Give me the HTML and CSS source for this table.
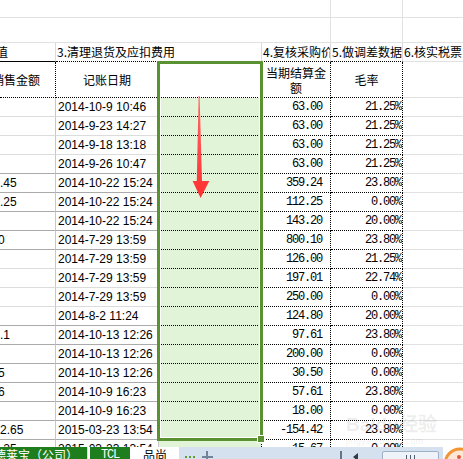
FILE: index.html
```html
<!DOCTYPE html>
<html lang="zh-CN">
<head>
<meta charset="utf-8">
<title>Sheet</title>
<link rel="stylesheet" href="styles.css">
</head>
<body>
<div class="page">
  <div class="sheet">
    <!-- row 1 -->
    <div class="c top span4"></div><div class="c top e-top"></div><div class="c top"></div>
    <!-- row 2 -->
    <div class="c top span4"></div><div class="c top e-top"></div><div class="c top"></div>
    <!-- row 3 -->
    <div class="c h1 h1a"><span class="shift16">价值</span></div>
    <div class="c h1 span2">3.清理退货及应扣费用</div>
    <div class="c h1">4.复核采购价格</div>
    <div class="c h1">5.做调差数据</div>
    <div class="c h1 h1f">6.核实税票</div>
    <!-- row 4 -->
    <div class="c h2 h2a"><span class="shift8">销售金额</span></div>
    <div class="c h2 center">记账日期</div>
    <div class="c h2 h2s"></div>
    <div class="c h2 center wrap">当期结算金额</div>
    <div class="c h2 center">毛率</div>
    <div class="c h2f"></div>

    <div class="c a"></div><div class="c b">2014-10-9 10:46</div><div class="c s"></div><div class="c n d">63.00</div><div class="c n e">21.25%</div><div class="c f"></div>
    <div class="c a"></div><div class="c b">2014-9-23 14:27</div><div class="c s"></div><div class="c n d">63.00</div><div class="c n e">21.25%</div><div class="c f"></div>
    <div class="c a"></div><div class="c b">2014-9-18 13:18</div><div class="c s"></div><div class="c n d">63.00</div><div class="c n e">21.25%</div><div class="c f"></div>
    <div class="c a dk"></div><div class="c b dk">2014-9-26 10:47</div><div class="c s"></div><div class="c n d">63.00</div><div class="c n e">21.25%</div><div class="c f"></div>
    <div class="c a dk">.45</div><div class="c b dk">2014-10-22 15:24</div><div class="c s"></div><div class="c n d">359.24</div><div class="c n e">23.80%</div><div class="c f"></div>
    <div class="c a dk">.25</div><div class="c b dk">2014-10-22 15:24</div><div class="c s"></div><div class="c n d">112.25</div><div class="c n e">0.00%</div><div class="c f"></div>
    <div class="c a dk"></div><div class="c b dk">2014-10-22 15:24</div><div class="c s"></div><div class="c n d">143.20</div><div class="c n e">20.00%</div><div class="c f"></div>
    <div class="c a dk"><span class="shift2">0</span></div><div class="c b dk">2014-7-29 13:59</div><div class="c s"></div><div class="c n d">800.10</div><div class="c n e">23.80%</div><div class="c f"></div>
    <div class="c a"></div><div class="c b">2014-7-29 13:59</div><div class="c s"></div><div class="c n d">126.00</div><div class="c n e">21.25%</div><div class="c f"></div>
    <div class="c a"></div><div class="c b">2014-7-29 13:59</div><div class="c s"></div><div class="c n d">197.01</div><div class="c n e">22.74%</div><div class="c f"></div>
    <div class="c a"></div><div class="c b">2014-7-29 13:59</div><div class="c s"></div><div class="c n d">250.00</div><div class="c n e">0.00%</div><div class="c f"></div>
    <div class="c a dk"></div><div class="c b dk">2014-8-2 11:24</div><div class="c s"></div><div class="c n d">124.80</div><div class="c n e">20.00%</div><div class="c f"></div>
    <div class="c a dk">.1</div><div class="c b dk">2014-10-13 12:26</div><div class="c s"></div><div class="c n d">97.61</div><div class="c n e">23.80%</div><div class="c f"></div>
    <div class="c a dk"></div><div class="c b dk">2014-10-13 12:26</div><div class="c s"></div><div class="c n d">200.00</div><div class="c n e">0.00%</div><div class="c f"></div>
    <div class="c a dk"><span class="shift2">5</span></div><div class="c b dk">2014-10-13 12:26</div><div class="c s"></div><div class="c n d">30.50</div><div class="c n e">0.00%</div><div class="c f"></div>
    <div class="c a dk"><span class="shift2">6</span></div><div class="c b dk">2014-10-9 16:23</div><div class="c s"></div><div class="c n d">57.61</div><div class="c n e">23.80%</div><div class="c f"></div>
    <div class="c a dk"></div><div class="c b dk">2014-10-9 16:23</div><div class="c s"></div><div class="c n d">18.00</div><div class="c n e">0.00%</div><div class="c f"></div>
    <div class="c a dk">2.65</div><div class="c b dk">2015-03-23 13:54</div><div class="c s"></div><div class="c n d">-154.42</div><div class="c n e">23.80%</div><div class="c f"></div>
    <div class="c a dk">.25</div><div class="c b dk">2015-03-23 13:54</div><div class="c s"></div><div class="c n d">-15.67</div><div class="c n e">0.00%</div><div class="c f"></div>
  </div>

  <div class="tabs">
    <div class="tab tab-first">德莱宝（公司）</div>
    <div class="tab tab-tcl">TCL</div>
    <div class="tab tab-plain">品尚</div>
    <div class="tab-rest">
      <span class="dots"><i></i><i></i><i></i></span>
      <span class="plus"></span>
      <span class="sep"></span>
      <span class="larrow"></span>
      <span class="thumb"><i></i><i></i><i></i></span>
    </div>
    <div class="logo">
      <svg width="20" height="12" viewBox="0 0 20 12"><circle cx="17" cy="17" r="15" fill="#fde8d6" stroke="#f29434" stroke-width="3"/><circle cx="16" cy="10" r="2" fill="#e2553b"/></svg>
    </div>
  </div>

  <div class="selection"><span class="handle"></span></div>

  <svg class="arrow" width="24" height="108" viewBox="188 94 24 108">
    <defs>
      <linearGradient id="ag" x1="0" y1="0" x2="0" y2="1">
        <stop offset="0" stop-color="#ff6a6a"/>
        <stop offset="1" stop-color="#ff3030"/>
      </linearGradient>
    </defs>
    <path d="M198.6 96 L199.6 96 L202 181 L209.3 181 L200.6 198 L192.6 181 L196.8 181 Z" fill="url(#ag)"/>
  </svg>

  <div class="watermark">Baidu经验<small>jingyan.baidu.com</small></div>
</div>
</body>
</html>
```

FILE: styles.css
```css
* { box-sizing: border-box; margin: 0; padding: 0; }
html, body { width: 463px; height: 459px; overflow: hidden; background: #fff; }
body {
  font-family: "Noto Sans CJK SC", "Liberation Sans", sans-serif;
  font-size: 12px;
  color: #000;
}
.page { position: relative; width: 463px; height: 459px; overflow: hidden; }

.sheet {
  display: grid;
  grid-template-columns: 56px 103px 103px 69px 72px 60px;
  grid-template-rows: 18px 25px 19px 36px;
  grid-auto-rows: 19px;
  height: 447px;
  overflow: hidden;
}
.c {
  display: flex;
  align-items: center;
  white-space: nowrap;
  overflow: hidden;
  border-bottom: 1px solid #e1e1e1;
  line-height: 14px;
}

/* top blank rows */
.span4 { grid-column: span 4; border-right: 1px solid #e1e1e1; }
.e-top { border-right: 1px solid #e1e1e1; }

/* header row 1 */
.h1 { border-right: 1px solid #dadada; border-bottom: 1px dotted #000; padding-left: 1px; }
.h1a { border-bottom: 1px solid #000; padding-left: 0; }
.h1f { border-right: none; border-bottom: 1px solid #e1e1e1; }
.span2 { grid-column: span 2; }

/* header row 2 */
.h2 { border-right: 1px dotted #000; border-bottom: 1px dotted #000; }
.h2a { padding-left: 0; }
.h2f { border-bottom: 1px solid #e1e1e1; }
.center { justify-content: center; text-align: center; }
.wrap { white-space: normal; line-height: 15px; padding: 0 3px; }

.shift16 { margin-left: -16px; }
.shift8 { margin-left: -8px; }
.shift2 { margin-left: -2px; }

/* data */
.a {
  border-right: 1px solid #c8c8c8;
  border-bottom: 1px solid #dcdcdc;
  font-family: "Liberation Sans", Arial, sans-serif;
}
.b {
  border-right: 1px solid #c8c8c8;
  border-bottom: 1px solid #dcdcdc;
  padding-left: 2px;
  font-family: "Liberation Sans", Arial, sans-serif;
}
.a.dk, .b.dk { border-bottom-color: #ababab; }
.s {
  background: #e2f4d7;
  border-right: 1px dotted #000;
  border-bottom: 1px dotted #000;
}
.n {
  justify-content: flex-end;
  border-right: 1px dotted #000;
  border-bottom: 1px dotted #000;
  font-family: "Liberation Mono", "DejaVu Sans Mono", monospace;
  font-size: 12px;
  letter-spacing: -1.2px;
}
.d { padding-right: 8px; }
.e { padding-right: 1px; }
.f { border-bottom: 1px solid #e1e1e1; }

/* selection overlay */
.selection {
  position: absolute;
  left: 157px;
  top: 61px;
  width: 106px;
  height: 380px;
  border: 3px solid #5a9232;
  box-shadow: inset 0 0 0 1px #fff;
}
.handle {
  position: absolute;
  right: -5px;
  bottom: -5px;
  width: 8px;
  height: 8px;
  background: #5a9232;
  border: 1px solid #fff;
}

.arrow { position: absolute; left: 188px; top: 94px; }

.watermark {
  position: absolute;
  left: 346px;
  top: 414px;
  font-family: "Liberation Sans", sans-serif;
  font-size: 19px;
  font-weight: bold;
  color: rgba(150, 150, 150, 0.16);
  line-height: 22px;
  display: flex;
  flex-direction: column;
}
.watermark small { font-size: 9px; line-height: 10px; font-weight: normal; letter-spacing: 0.3px; }

/* sheet tabs */
.tabs {
  display: flex;
  height: 12px;
  overflow: hidden;
  background: #fff;
}
.tab { height: 12px; line-height: 16px; white-space: nowrap; overflow: hidden; flex: none; }
.tab-first {
  width: 88px;
  background: #1e7e1e;
  color: #fff;
  display: flex;
  justify-content: flex-end;
  padding-right: 9px;
  border-right: 1px solid #cfe3cf;
}
.tab-tcl {
  width: 40px;
  margin-left: 2px;
  background: #1e7e1e;
  color: #fff;
  text-align: center;
  font-family: "Liberation Mono", monospace;
  letter-spacing: -1.2px;
}
.tab-plain { width: 36px; margin-left: 13px; color: #000; }
.tab-rest {
  flex: none;
  width: 264px;
  height: 12px;
  background: #d5e1ee;
  display: flex;
  align-items: flex-start;
  padding-left: 6px;
}
.dots { display: flex; gap: 2px; margin-top: 9px; flex: none; }
.dots i { display: block; width: 2px; height: 2px; background: #5c9e31; }
.plus { position: relative; width: 11px; height: 12px; margin-left: 7px; flex: none; }
.plus::before { content: ""; position: absolute; left: 0; top: 9px; width: 11px; height: 2px; background: #71849a; }
.plus::after { content: ""; position: absolute; left: 4px; top: 4px; width: 2px; height: 8px; background: #71849a; }
.sep { width: 2px; height: 8px; margin-top: 4px; margin-left: 127px; background: #64758a; flex: none; }
.larrow {
  width: 0; height: 0; margin-left: 11px; margin-top: 6px; flex: none;
  border-right: 5px solid #2f3b48;
  border-top: 4px solid transparent;
  border-bottom: 4px solid transparent;
}
.thumb {
  width: 57px; height: 10px; margin-left: 24px; margin-top: 4px; flex: none;
  background: #eef3f9;
  border: 1px solid #9fb1c6;
  border-radius: 2px;
  display: flex; justify-content: center; gap: 3px; padding-top: 3px;
}
.thumb i { display: block; width: 1px; height: 8px; background: #4f5f70; }
.logo { flex: none; width: 20px; height: 12px; }
.logo svg { display: block; }
```
